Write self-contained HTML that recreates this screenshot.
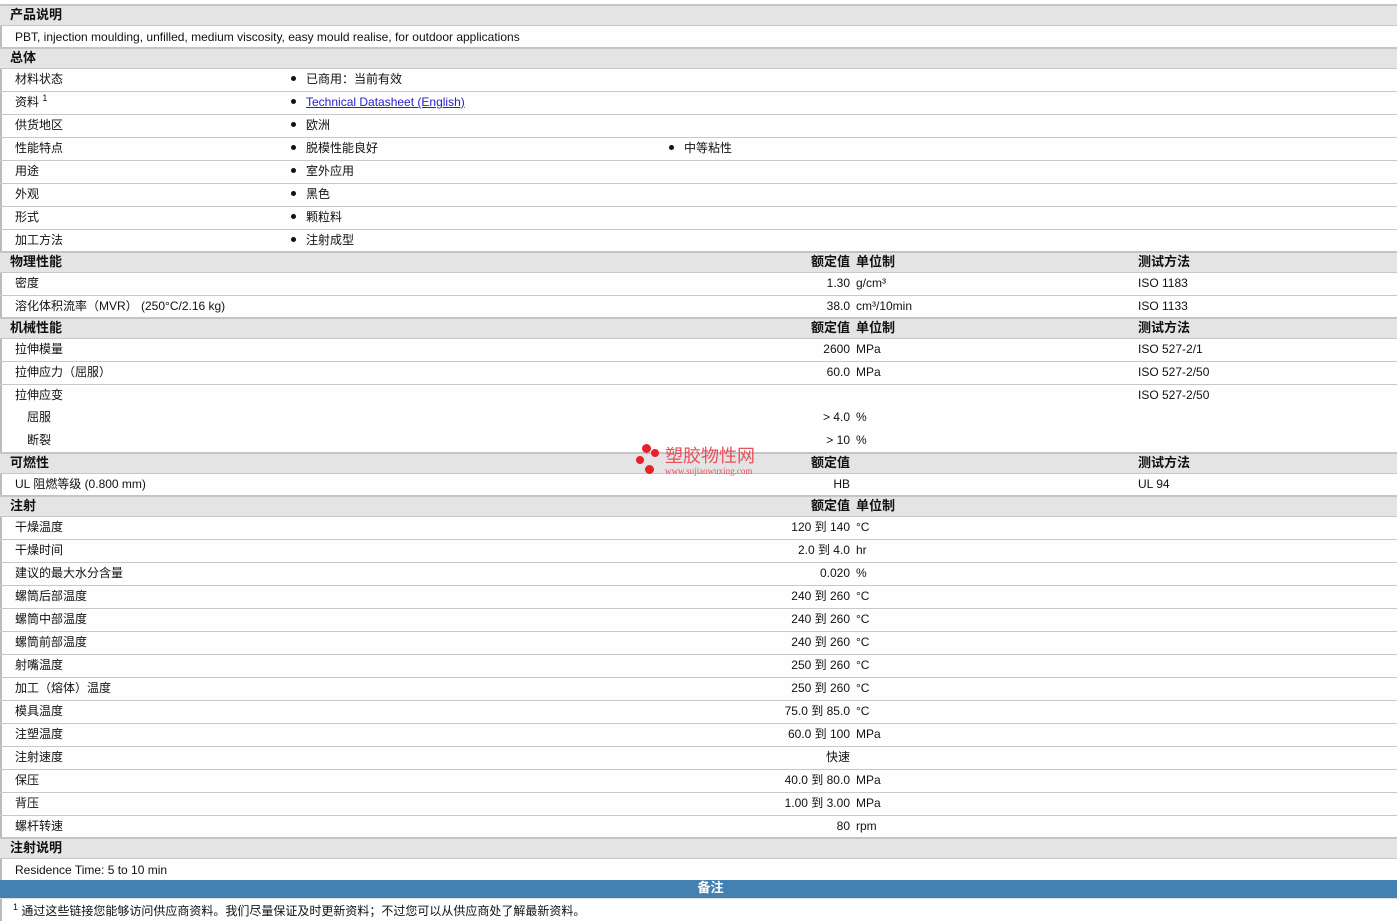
<!DOCTYPE html>
<html><head><meta charset="utf-8"><style>
body{margin:0;width:1397px;height:921px;background:#fdfefd;font-family:"Liberation Sans","Noto Sans CJK SC",sans-serif;font-size:12px;color:#111;position:relative;overflow:hidden}
.r{position:absolute;left:0;width:1397px;border-top:1px solid #c8c8c8;box-sizing:border-box}
.h{background:#e4e4e4;border-top:2px solid #c4c4c4;font-weight:bold;font-size:13px}
.r span{position:absolute;top:0;white-space:nowrap}
.l{left:15px}.s{left:27px}.hl{left:10px}
.b{left:291px}.b2{left:669px}
.v{left:600px;width:250px;text-align:right}
.u{left:856px}.m{left:1138px}
.bul::before{content:"";display:inline-block;width:5px;height:5px;border-radius:50%;background:#111;margin-right:10px;vertical-align:2px}
a{color:#2222cc;text-decoration:underline}
sup{font-size:9px;vertical-align:0;position:relative;top:-5px}
.vl{position:absolute;left:0;top:4px;width:2px;height:917px;background:#bcbcbc}
</style></head><body>
<div class="vl"></div>
<div class="r h" style="top:4px;height:21px;line-height:18px"><span class="hl">产品说明</span></div>
<div class="r" style="top:25px;height:22px;line-height:22px"><span class="l">PBT, injection moulding, unfilled, medium viscosity, easy mould realise, for outdoor applications</span></div>
<div class="r h" style="top:47px;height:21px;line-height:18px"><span class="hl">总体</span></div>
<div class="r" style="top:68px;height:23px;line-height:21px"><span class="l">材料状态</span><span class="b bul">已商用：当前有效</span></div>
<div class="r" style="top:91px;height:23px;line-height:21px"><span class="l">资料 <sup>1</sup></span><span class="b bul"><a>Technical Datasheet (English)</a></span></div>
<div class="r" style="top:114px;height:23px;line-height:21px"><span class="l">供货地区</span><span class="b bul">欧洲</span></div>
<div class="r" style="top:137px;height:23px;line-height:21px"><span class="l">性能特点</span><span class="b bul">脱模性能良好</span><span class="b2 bul">中等粘性</span></div>
<div class="r" style="top:160px;height:23px;line-height:21px"><span class="l">用途</span><span class="b bul">室外应用</span></div>
<div class="r" style="top:183px;height:23px;line-height:21px"><span class="l">外观</span><span class="b bul">黑色</span></div>
<div class="r" style="top:206px;height:23px;line-height:21px"><span class="l">形式</span><span class="b bul">颗粒料</span></div>
<div class="r" style="top:229px;height:22px;line-height:21px"><span class="l">加工方法</span><span class="b bul">注射成型</span></div>
<div class="r h" style="top:251px;height:21px;line-height:18px"><span class="hl">物理性能</span><span class="v">额定值</span><span class="u">单位制</span><span class="m">测试方法</span></div>
<div class="r" style="top:272px;height:23px;line-height:21px"><span class="l">密度</span><span class="v">1.30</span><span class="u">g/cm³</span><span class="m">ISO 1183</span></div>
<div class="r" style="top:295px;height:22px;line-height:21px"><span class="l">溶化体积流率（MVR） (250°C/2.16 kg)</span><span class="v">38.0</span><span class="u">cm³/10min</span><span class="m">ISO 1133</span></div>
<div class="r h" style="top:317px;height:21px;line-height:18px"><span class="hl">机械性能</span><span class="v">额定值</span><span class="u">单位制</span><span class="m">测试方法</span></div>
<div class="r" style="top:338px;height:23px;line-height:21px"><span class="l">拉伸模量</span><span class="v">2600</span><span class="u">MPa</span><span class="m">ISO 527-2/1</span></div>
<div class="r" style="top:361px;height:23px;line-height:21px"><span class="l">拉伸应力（屈服）</span><span class="v">60.0</span><span class="u">MPa</span><span class="m">ISO 527-2/50</span></div>
<div class="r" style="top:384px;height:23px;line-height:21px"><span class="l">拉伸应变</span><span class="m">ISO 527-2/50</span></div>
<div class="r" style="top:407px;height:23px;line-height:21px;border-top:none"><span class="s">屈服</span><span class="v">&gt; 4.0</span><span class="u">%</span></div>
<div class="r" style="top:430px;height:22px;line-height:21px;border-top:none"><span class="s">断裂</span><span class="v">&gt; 10</span><span class="u">%</span></div>
<div class="r h" style="top:452px;height:21px;line-height:18px"><span class="hl">可燃性</span><span class="v">额定值</span><span class="m">测试方法</span></div>
<div class="r" style="top:473px;height:22px;line-height:21px"><span class="l">UL 阻燃等级 (0.800 mm)</span><span class="v">HB</span><span class="m">UL 94</span></div>
<div class="r h" style="top:495px;height:21px;line-height:18px"><span class="hl">注射</span><span class="v">额定值</span><span class="u">单位制</span></div>
<div class="r" style="top:516px;height:23px;line-height:21px"><span class="l">干燥温度</span><span class="v">120 到 140</span><span class="u">°C</span></div>
<div class="r" style="top:539px;height:23px;line-height:21px"><span class="l">干燥时间</span><span class="v">2.0 到 4.0</span><span class="u">hr</span></div>
<div class="r" style="top:562px;height:23px;line-height:21px"><span class="l">建议的最大水分含量</span><span class="v">0.020</span><span class="u">%</span></div>
<div class="r" style="top:585px;height:23px;line-height:21px"><span class="l">螺筒后部温度</span><span class="v">240 到 260</span><span class="u">°C</span></div>
<div class="r" style="top:608px;height:23px;line-height:21px"><span class="l">螺筒中部温度</span><span class="v">240 到 260</span><span class="u">°C</span></div>
<div class="r" style="top:631px;height:23px;line-height:21px"><span class="l">螺筒前部温度</span><span class="v">240 到 260</span><span class="u">°C</span></div>
<div class="r" style="top:654px;height:23px;line-height:21px"><span class="l">射嘴温度</span><span class="v">250 到 260</span><span class="u">°C</span></div>
<div class="r" style="top:677px;height:23px;line-height:21px"><span class="l">加工（熔体）温度</span><span class="v">250 到 260</span><span class="u">°C</span></div>
<div class="r" style="top:700px;height:23px;line-height:21px"><span class="l">模具温度</span><span class="v">75.0 到 85.0</span><span class="u">°C</span></div>
<div class="r" style="top:723px;height:23px;line-height:21px"><span class="l">注塑温度</span><span class="v">60.0 到 100</span><span class="u">MPa</span></div>
<div class="r" style="top:746px;height:23px;line-height:21px"><span class="l">注射速度</span><span class="v">快速</span></div>
<div class="r" style="top:769px;height:23px;line-height:21px"><span class="l">保压</span><span class="v">40.0 到 80.0</span><span class="u">MPa</span></div>
<div class="r" style="top:792px;height:23px;line-height:21px"><span class="l">背压</span><span class="v">1.00 到 3.00</span><span class="u">MPa</span></div>
<div class="r" style="top:815px;height:22px;line-height:21px"><span class="l">螺杆转速</span><span class="v">80</span><span class="u">rpm</span></div>
<div class="r h" style="top:837px;height:21px;line-height:18px"><span class="hl">注射说明</span></div>
<div class="r" style="top:858px;height:22px;line-height:22px"><span class="l">Residence Time: 5 to 10 min</span></div>
<div class="r" style="top:880px;height:18px;line-height:16px;background:#4481b3;border:none;color:#fff;font-weight:bold;font-size:13px;text-align:center;padding-left:24px">备注</div>
<div class="r" style="top:898px;height:23px;line-height:24px;border-top:1px solid #ddd"><span class="l" style="left:13px"><sup>1</sup> 通过这些链接您能够访问供应商资料。我们尽量保证及时更新资料；不过您可以从供应商处了解最新资料。</span></div>
<div style="position:absolute;left:636px;top:444px;width:130px;height:34px">
<div style="position:absolute;left:6px;top:0;width:9px;height:9px;border-radius:50%;background:#e8202a"></div>
<div style="position:absolute;left:15px;top:5px;width:8px;height:8px;border-radius:50%;background:#e8202a"></div>
<div style="position:absolute;left:0;top:12px;width:8px;height:8px;border-radius:50%;background:#e8202a"></div>
<div style="position:absolute;left:9px;top:21px;width:9px;height:9px;border-radius:50%;background:#e8202a"></div>
<div style="position:absolute;left:29px;top:2px;color:#e8505a;font-size:18px;line-height:20px;white-space:nowrap">塑胶物性网</div>
<div style="position:absolute;left:29px;top:22px;color:#e8505a;font-size:9px;font-family:'Liberation Serif',serif;white-space:nowrap">www.sujiaowuxing.com</div>
</div>
</body></html>
